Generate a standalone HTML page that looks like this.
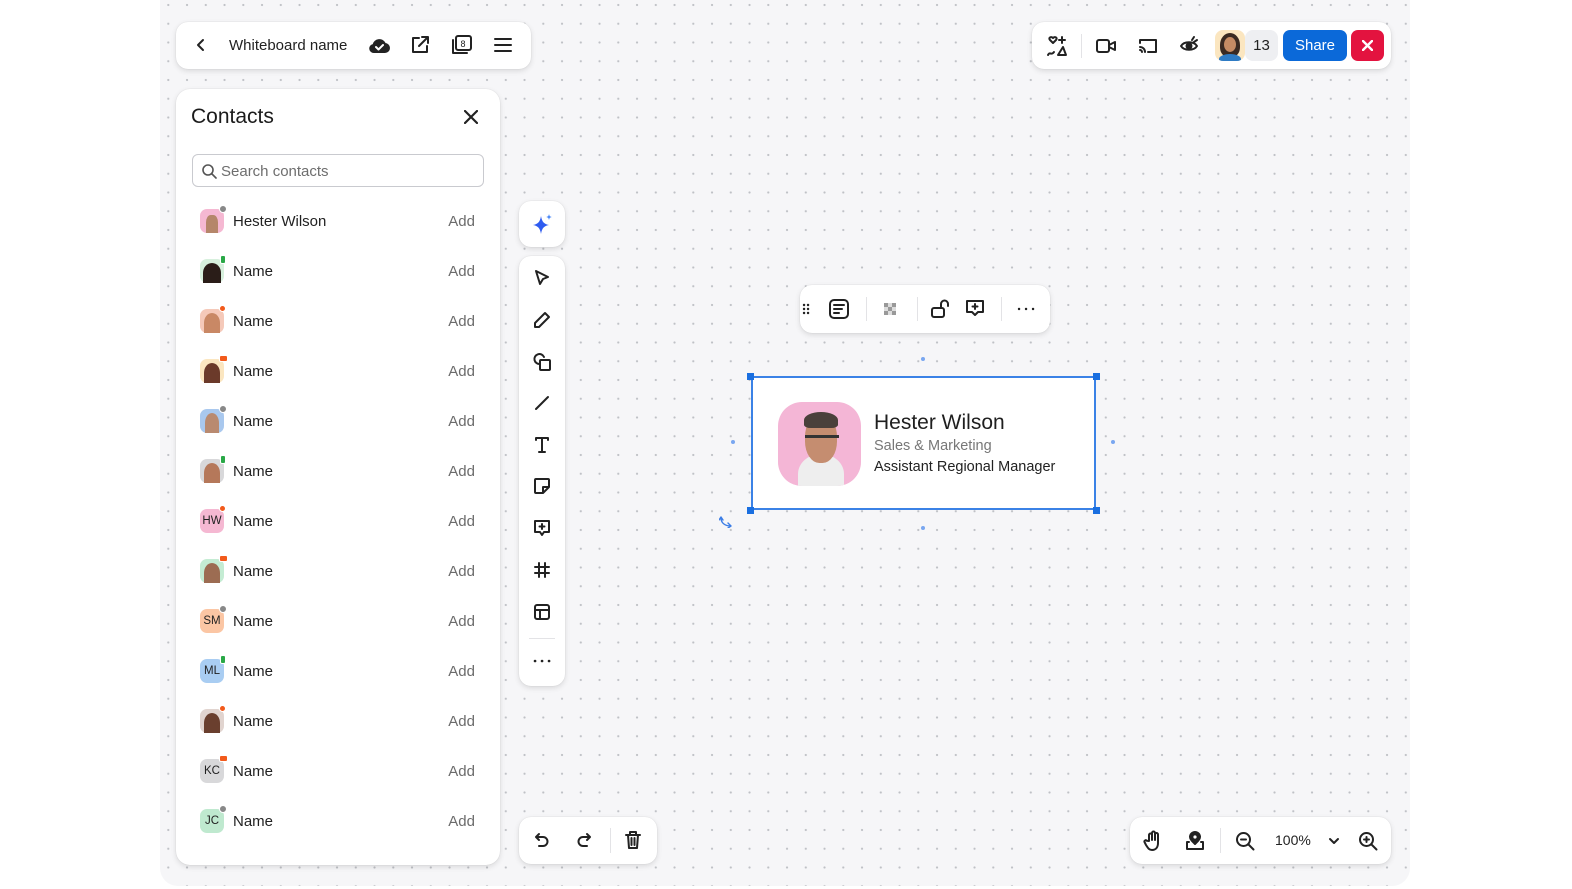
<!DOCTYPE html>
<html><head><meta charset="utf-8"><style>
*{box-sizing:border-box;margin:0;padding:0}
body{width:1572px;height:889px;background:#fff;font-family:"Liberation Sans",sans-serif;position:relative;overflow:hidden;color:#222}
.canvas{position:absolute;left:160px;top:0;width:1250px;height:886px;border-radius:0 0 18px 18px;background-color:#f6f6f8;background-image:radial-gradient(circle,#bfc1c6 0.9px,transparent 1.3px);background-size:18.75px 18.75px;background-position:-1.1px -4.4px}
.box{position:absolute;background:#fff;border-radius:12px;box-shadow:0 2px 6px rgba(0,0,0,.12),0 0 1px rgba(0,0,0,.15)}
svg{position:absolute;fill:none;stroke:#222;stroke-width:2;stroke-linecap:round;stroke-linejoin:round}
.row{position:absolute;left:200px;width:280px;height:24px}
.av{position:absolute;left:0;top:0;width:24px;height:24px;border-radius:7px;font-size:11.5px;display:flex;align-items:center;justify-content:center;color:#222}
.badge{position:absolute;left:19px;top:-4px;width:8px;height:8px;border-radius:50%;background:#888;border:1px solid #fff}
.nm{position:absolute;left:33px;top:4px;font-size:15px;color:#222}
.add{position:absolute;right:5px;top:4px;font-size:15px;color:#6b6b6b}
.sep{position:absolute;background:#e3e3e6}
</style></head><body>
<div class="canvas"></div>

<div class="box" style="left:176px;top:22px;width:355px;height:47px">
<svg style="left:18px;top:16px" width="14" height="14" viewBox="0 0 14 14"><path d="M9 2L4 7l5 5"/></svg>
<div style="position:absolute;left:53px;top:15px;font-size:15px;color:#222">Whiteboard name</div>
<svg style="left:192px;top:14px" width="22" height="18" viewBox="0 0 22 18"><path d="M6 16h11a4 4 0 0 0 0-8 6 6 0 0 0-11.5 1A3.5 3.5 0 0 0 6 16z" fill="#222"/><path d="M8 11l2.5 2.5L15 9" stroke="#fff"/></svg>
<svg style="left:234px;top:13px" width="20" height="20" viewBox="0 0 20 20"><path d="M9 3H3v14h14v-6M12 2h6v6M18 2l-9 9"/></svg>
<svg style="left:273px;top:12px" width="24" height="22" viewBox="0 0 24 22"><rect x="7" y="2" width="15" height="14" rx="2"/><path d="M4 6v13h14"/><text x="11.5" y="13" font-size="9" fill="#222" stroke="none" font-family="Liberation Sans">8</text></svg>
<svg style="left:318px;top:15px" width="18" height="16" viewBox="0 0 18 16"><path d="M1 2h16M1 8h16M1 14h16"/></svg>
</div>

<div class="box" style="left:1032px;top:22px;width:359px;height:47px">
<svg style="left:13px;top:12px" width="24" height="24" viewBox="0 0 24 24"><path d="M5 6c-2-2 1-4 3-2 2-2 5 0 3 2l-3 3z"/><path d="M17 3v6M14 6h6M3 21c2-4 3 1 6-3M13 21l5-8 3 8z"/></svg>
<div class="sep" style="left:49px;top:12px;width:1px;height:24px"></div>
<svg style="left:64px;top:16px" width="20" height="16" viewBox="0 0 20 16"><rect x="1" y="2" width="12" height="12" rx="2"/><path d="M13 7l6-3v8l-6-3"/></svg>
<svg style="left:106px;top:15px" width="20" height="18" viewBox="0 0 20 18"><path d="M2 6V3h16v12h-8M2 10a5 5 0 0 1 5 5M2 13a2 2 0 0 1 2 2"/></svg>
<svg style="left:147px;top:13px" width="20" height="20" viewBox="0 0 20 20"><path d="M2 11c3-5 13-5 16 0-3 5-13 5-16 0z"/><circle cx="10" cy="11" r="2.5" fill="#222"/><path d="M13 5l2-3M15 7l3-2"/></svg>
<div style="position:absolute;left:183px;top:8px;width:30px;height:31px;border-radius:8px;background:#fbe6c0;overflow:hidden"><div style="position:absolute;left:5px;top:3px;width:20px;height:24px;border-radius:50% 50% 40% 40%;background:#3a2a22"></div><div style="position:absolute;left:9px;top:7px;width:12px;height:15px;border-radius:50%;background:#c58b64"></div><div style="position:absolute;left:4px;top:24px;width:22px;height:10px;border-radius:50% 50% 0 0;background:#2e7bc4"></div></div>
<div style="position:absolute;left:213px;top:8px;width:33px;height:31px;border-radius:8px;background:#eeeff2;font-size:15px;text-align:center;line-height:31px">13</div>
<div style="position:absolute;left:251px;top:8px;width:64px;height:31px;border-radius:7px;background:#0b69d9;color:#fff;font-size:15px;text-align:center;line-height:31px">Share</div>
<div style="position:absolute;left:319px;top:8px;width:33px;height:31px;border-radius:7px;background:#e3133f"><svg style="left:11px;top:10px;stroke:#fff;stroke-width:2.4" width="11" height="11" viewBox="0 0 11 11"><path d="M1 1l9 9M10 1l-9 9"/></svg></div>
</div>

<div class="box" style="left:176px;top:89px;width:324px;height:776px;border-radius:14px">
<div style="position:absolute;left:15px;top:16px;font-size:21px;color:#1b1b1b">Contacts</div>
<svg style="left:288px;top:21px;stroke-width:2.2" width="14" height="14" viewBox="0 0 14 14"><path d="M1 1l12 12M13 1L1 13"/></svg>
<div style="position:absolute;left:16px;top:65px;width:292px;height:33px;border:1px solid #c9cacf;border-radius:6px"></div>
<svg style="left:25px;top:74px;stroke:#555;stroke-width:1.6" width="16" height="16" viewBox="0 0 16 16"><circle cx="7" cy="7" r="5"/><path d="M11 11l4 4"/></svg>
<div style="position:absolute;left:45px;top:74px;font-size:15px;color:#6e6e6e">Search contacts</div>
</div>

<div class="row" style="top:209px"><div class="av" style="background:#f5b8d2"><div style="width:12px;height:18px;margin-top:6px;border-radius:40% 40% 0 0;background:#b5866a"></div></div><div class="badge"></div><div class="nm">Hester Wilson</div><div class="add">Add</div></div>
<div class="row" style="top:259px"><div class="av" style="background:#d7f0dd"><div style="width:18px;height:20px;margin-top:4px;border-radius:50% 50% 0 0;background:#2a1d18"></div></div><div class="badge" style="background:#2aa847;border-radius:2px;width:6px;height:9px;left:20px"></div><div class="nm">Name</div><div class="add">Add</div></div>
<div class="row" style="top:309px"><div class="av" style="background:#f5c9b9"><div style="width:16px;height:20px;margin-top:4px;border-radius:50% 50% 0 0;background:#c98865"></div></div><div class="badge" style="background:#f25a1c;width:7px;height:7px"></div><div class="nm">Name</div><div class="add">Add</div></div>
<div class="row" style="top:359px"><div class="av" style="background:#fbe6c0"><div style="width:16px;height:20px;margin-top:4px;border-radius:50% 50% 0 0;background:#6b3a2a"></div></div><div class="badge" style="background:#f25a1c;border-radius:2px;width:9px;height:7px"></div><div class="nm">Name</div><div class="add">Add</div></div>
<div class="row" style="top:409px"><div class="av" style="background:#a9c8ee"><div style="width:14px;height:20px;margin-top:4px;border-radius:50% 50% 0 0;background:#b98a70"></div></div><div class="badge"></div><div class="nm">Name</div><div class="add">Add</div></div>
<div class="row" style="top:459px"><div class="av" style="background:#d8d8da"><div style="width:16px;height:20px;margin-top:4px;border-radius:50% 50% 0 0;background:#b5785a"></div></div><div class="badge" style="background:#2aa847;border-radius:2px;width:6px;height:9px;left:20px"></div><div class="nm">Name</div><div class="add">Add</div></div>
<div class="row" style="top:509px"><div class="av" style="background:#f5b8d2">HW</div><div class="badge" style="background:#f25a1c;width:7px;height:7px"></div><div class="nm">Name</div><div class="add">Add</div></div>
<div class="row" style="top:559px"><div class="av" style="background:#c4ecd3"><div style="width:16px;height:20px;margin-top:4px;border-radius:50% 50% 0 0;background:#9c6c52"></div></div><div class="badge" style="background:#f25a1c;border-radius:2px;width:9px;height:7px"></div><div class="nm">Name</div><div class="add">Add</div></div>
<div class="row" style="top:609px"><div class="av" style="background:#fbc6a4">SM</div><div class="badge"></div><div class="nm">Name</div><div class="add">Add</div></div>
<div class="row" style="top:659px"><div class="av" style="background:#a9cdf2">ML</div><div class="badge" style="background:#2aa847;border-radius:2px;width:6px;height:9px;left:20px"></div><div class="nm">Name</div><div class="add">Add</div></div>
<div class="row" style="top:709px"><div class="av" style="background:#e1d4cf"><div style="width:16px;height:20px;margin-top:4px;border-radius:50% 50% 0 0;background:#6a3f2e"></div></div><div class="badge" style="background:#f25a1c;width:7px;height:7px"></div><div class="nm">Name</div><div class="add">Add</div></div>
<div class="row" style="top:759px"><div class="av" style="background:#d8d8da">KC</div><div class="badge" style="background:#f25a1c;border-radius:2px;width:9px;height:7px"></div><div class="nm">Name</div><div class="add">Add</div></div>
<div class="row" style="top:809px"><div class="av" style="background:#bfe9cf">JC</div><div class="badge"></div><div class="nm">Name</div><div class="add">Add</div></div>

<div class="box" style="left:519px;top:201px;width:46px;height:46px">
<svg style="left:12px;top:12px;stroke:none" width="24" height="24" viewBox="0 0 24 24"><path d="M10 3c1 6 3 8 8 9-5 1-7 3-8 9-1-6-3-8-8-9 5-1 7-3 8-9z" fill="#2f5cf0"/><path d="M18 1c.4 2 1 2.6 3 3-2 .4-2.6 1-3 3-.4-2-1-2.6-3-3 2-.4 2.6-1 3-3z" fill="#4d8af7"/></svg></div>
<div class="box" style="left:519px;top:256px;width:46px;height:430px">
<svg style="left:14px;top:13px" width="18" height="18" viewBox="0 0 18 18"><path d="M3 2l12 6-5 2-3 5z"/></svg>
<svg style="left:14px;top:55px" width="18" height="18" viewBox="0 0 18 18"><path d="M12 2l4 4-10 10H2v-4z"/></svg>
<svg style="left:13px;top:96px" width="20" height="20" viewBox="0 0 20 20"><path d="M8 12a5 5 0 1 1 4-7"/><rect x="8" y="8" width="10" height="10" rx="1"/></svg>
<svg style="left:14px;top:138px" width="18" height="18" viewBox="0 0 18 18"><path d="M3 15L15 3"/></svg>
<svg style="left:15px;top:180px" width="16" height="18" viewBox="0 0 16 18"><path d="M2 4V2h12v2M8 2v14M5 16h6"/></svg>
<svg style="left:14px;top:221px" width="18" height="18" viewBox="0 0 18 18"><path d="M16 10V3a1 1 0 0 0-1-1H3a1 1 0 0 0-1 1v12a1 1 0 0 0 1 1h7zM10 16v-6h6"/></svg>
<svg style="left:13px;top:262px" width="20" height="20" viewBox="0 0 20 20"><path d="M3 3h14v11h-5l-2 3-2-3H3zM10 6v5M7.5 8.5h5"/></svg>
<svg style="left:14px;top:305px" width="18" height="18" viewBox="0 0 18 18"><path d="M6 2v14M12 2v14M2 6h14M2 12h14"/></svg>
<svg style="left:14px;top:347px" width="18" height="18" viewBox="0 0 18 18"><rect x="2" y="2" width="14" height="14" rx="2"/><path d="M2 7h14M7 7v9"/></svg>
<div class="sep" style="left:10px;top:382px;width:26px;height:1px"></div>
<svg style="left:14px;top:398px;stroke-width:2.6" width="18" height="14" viewBox="0 0 18 14"><path d="M2 7h.1M9 7h.1M16 7h.1"/></svg>
</div>

<div class="box" style="left:519px;top:817px;width:138px;height:47px">
<svg style="left:14px;top:14px" width="18" height="18" viewBox="0 0 18 18"><path d="M6 3L3 6l3 3M3 6h7a4.5 4.5 0 0 1 0 9H6"/></svg>
<svg style="left:56px;top:14px" width="18" height="18" viewBox="0 0 18 18"><path d="M12 3l3 3-3 3M15 6H8a4.5 4.5 0 0 0 0 9h4"/></svg>
<div class="sep" style="left:91px;top:11px;width:1px;height:25px"></div>
<svg style="left:105px;top:13px" width="18" height="20" viewBox="0 0 18 20"><path d="M2 5h14M6 5V2h6v3M4 5l1 13h8l1-13M7.5 8v7M10.5 8v7"/></svg>
</div>

<div class="box" style="left:1130px;top:817px;width:261px;height:47px">
<svg style="left:13px;top:13px" width="20" height="22" viewBox="0 0 20 22"><path d="M6 11V5a1.5 1.5 0 0 1 3 0v5V3a1.5 1.5 0 0 1 3 0v7V4.5a1.5 1.5 0 0 1 3 0V13c0 4-2 7-6 7-3 0-4-2-6-5l-1.5-3a1.3 1.3 0 0 1 2.2-1.3z"/></svg>
<svg style="left:54px;top:13px" width="22" height="22" viewBox="0 0 22 22"><path d="M11 14c-3-3-5-5-5-7a5 5 0 0 1 10 0c0 2-2 4-5 7z" fill="#222"/><circle cx="11" cy="7" r="1.6" fill="#fff" stroke="none"/><path d="M5 12H3v7h16v-7h-2"/></svg>
<div class="sep" style="left:90px;top:11px;width:1px;height:25px"></div>
<svg style="left:105px;top:14px" width="20" height="20" viewBox="0 0 20 20"><circle cx="8.5" cy="8.5" r="6.5"/><path d="M13.5 13.5l5 5M6 8.5h5"/></svg>
<div style="position:absolute;left:145px;top:15px;font-size:14px;color:#222">100%</div>
<svg style="left:198px;top:19px" width="12" height="10" viewBox="0 0 12 10"><path d="M2 3l4 4 4-4"/></svg>
<svg style="left:228px;top:14px" width="20" height="20" viewBox="0 0 20 20"><circle cx="8.5" cy="8.5" r="6.5"/><path d="M13.5 13.5l5 5M6 8.5h5M8.5 6v5"/></svg>
</div>

<div class="box" style="left:800px;top:285px;width:250px;height:48px">
<svg style="left:2px;top:18px;stroke-width:2.4" width="8" height="12" viewBox="0 0 8 12"><path d="M2 2h.1M6 2h.1M2 6h.1M6 6h.1M2 10h.1M6 10h.1"/></svg>
<svg style="left:28px;top:13px" width="22" height="22" viewBox="0 0 22 22"><rect x="2" y="2" width="18" height="18" rx="4"/><path d="M6 7h10M6 11h8M6 15h5"/></svg>
<div class="sep" style="left:66px;top:12px;width:1px;height:24px"></div>
<svg style="left:81px;top:15px;stroke:none" width="18" height="18" viewBox="0 0 18 18"><g fill="#999"><rect x="3" y="3" width="4" height="4"/><rect x="11" y="3" width="4" height="4"/><rect x="7" y="7" width="4" height="4"/><rect x="3" y="11" width="4" height="4"/><rect x="11" y="11" width="4" height="4"/></g><g fill="#ddd"><rect x="7" y="3" width="4" height="4"/><rect x="3" y="7" width="4" height="4"/><rect x="11" y="7" width="4" height="4"/><rect x="7" y="11" width="4" height="4"/></g></svg>
<div class="sep" style="left:117px;top:12px;width:1px;height:24px"></div>
<svg style="left:130px;top:13px" width="22" height="22" viewBox="0 0 22 22"><rect x="2" y="10" width="12" height="9" rx="2"/><path d="M11 10V6a3.5 3.5 0 0 1 7 0v2"/></svg>
<svg style="left:164px;top:13px" width="22" height="22" viewBox="0 0 22 22"><path d="M3 3h16v11h-5l-3 3-3-3H3zM11 6v5M8.5 8.5h5"/></svg>
<div class="sep" style="left:201px;top:12px;width:1px;height:24px"></div>
<svg style="left:216px;top:17px;stroke-width:2.4" width="20" height="14" viewBox="0 0 20 14"><path d="M3 7h.1M10 7h.1M17 7h.1"/></svg>
</div>

<div style="position:absolute;left:921px;top:357px;width:4px;height:4px;border-radius:50%;background:#7aa7f0"></div>
<div style="position:absolute;left:921px;top:526px;width:4px;height:4px;border-radius:50%;background:#7aa7f0"></div>
<div style="position:absolute;left:731px;top:440px;width:4px;height:4px;border-radius:50%;background:#7aa7f0"></div>
<div style="position:absolute;left:1111px;top:440px;width:4px;height:4px;border-radius:50%;background:#7aa7f0"></div>
<svg style="left:719px;top:516px;stroke:#3b7de6;stroke-width:1.4" width="14" height="12" viewBox="0 0 14 12"><path d="M2 2c0 5 4 8 10 8M9 7l3 3-3 2M0 4l2-3 2 3"/></svg>

<div style="position:absolute;left:751px;top:376px;width:345px;height:134px;background:#fff;border:2px solid #3b82e6">
<div style="position:absolute;left:25px;top:24px;width:83px;height:84px;border-radius:24px;background:#f4b6d6;overflow:hidden">
<div style="position:absolute;left:20px;top:52px;width:46px;height:40px;border-radius:50% 50% 0 0;background:#eeeeee"></div>
<div style="position:absolute;left:27px;top:13px;width:32px;height:48px;border-radius:45%;background:#c58d70"></div>
<div style="position:absolute;left:26px;top:10px;width:34px;height:16px;border-radius:50% 50% 20% 20%;background:#4a403b"></div>
<div style="position:absolute;left:27px;top:33px;width:34px;height:3px;background:#333"></div>
</div>
<div style="position:absolute;left:121px;top:33px;font-size:21px;color:#1f1f1f">Hester Wilson</div>
<div style="position:absolute;left:121px;top:60px;font-size:14.5px;color:#777">Sales &amp; Marketing</div>
<div style="position:absolute;left:121px;top:81px;font-size:14.5px;color:#222">Assistant Regional Manager</div>
</div>
<div style="position:absolute;left:747px;top:373px;width:7px;height:7px;background:#1a6fe0"></div>
<div style="position:absolute;left:1093px;top:373px;width:7px;height:7px;background:#1a6fe0"></div>
<div style="position:absolute;left:747px;top:507px;width:7px;height:7px;background:#1a6fe0"></div>
<div style="position:absolute;left:1093px;top:507px;width:7px;height:7px;background:#1a6fe0"></div>
</body></html>
